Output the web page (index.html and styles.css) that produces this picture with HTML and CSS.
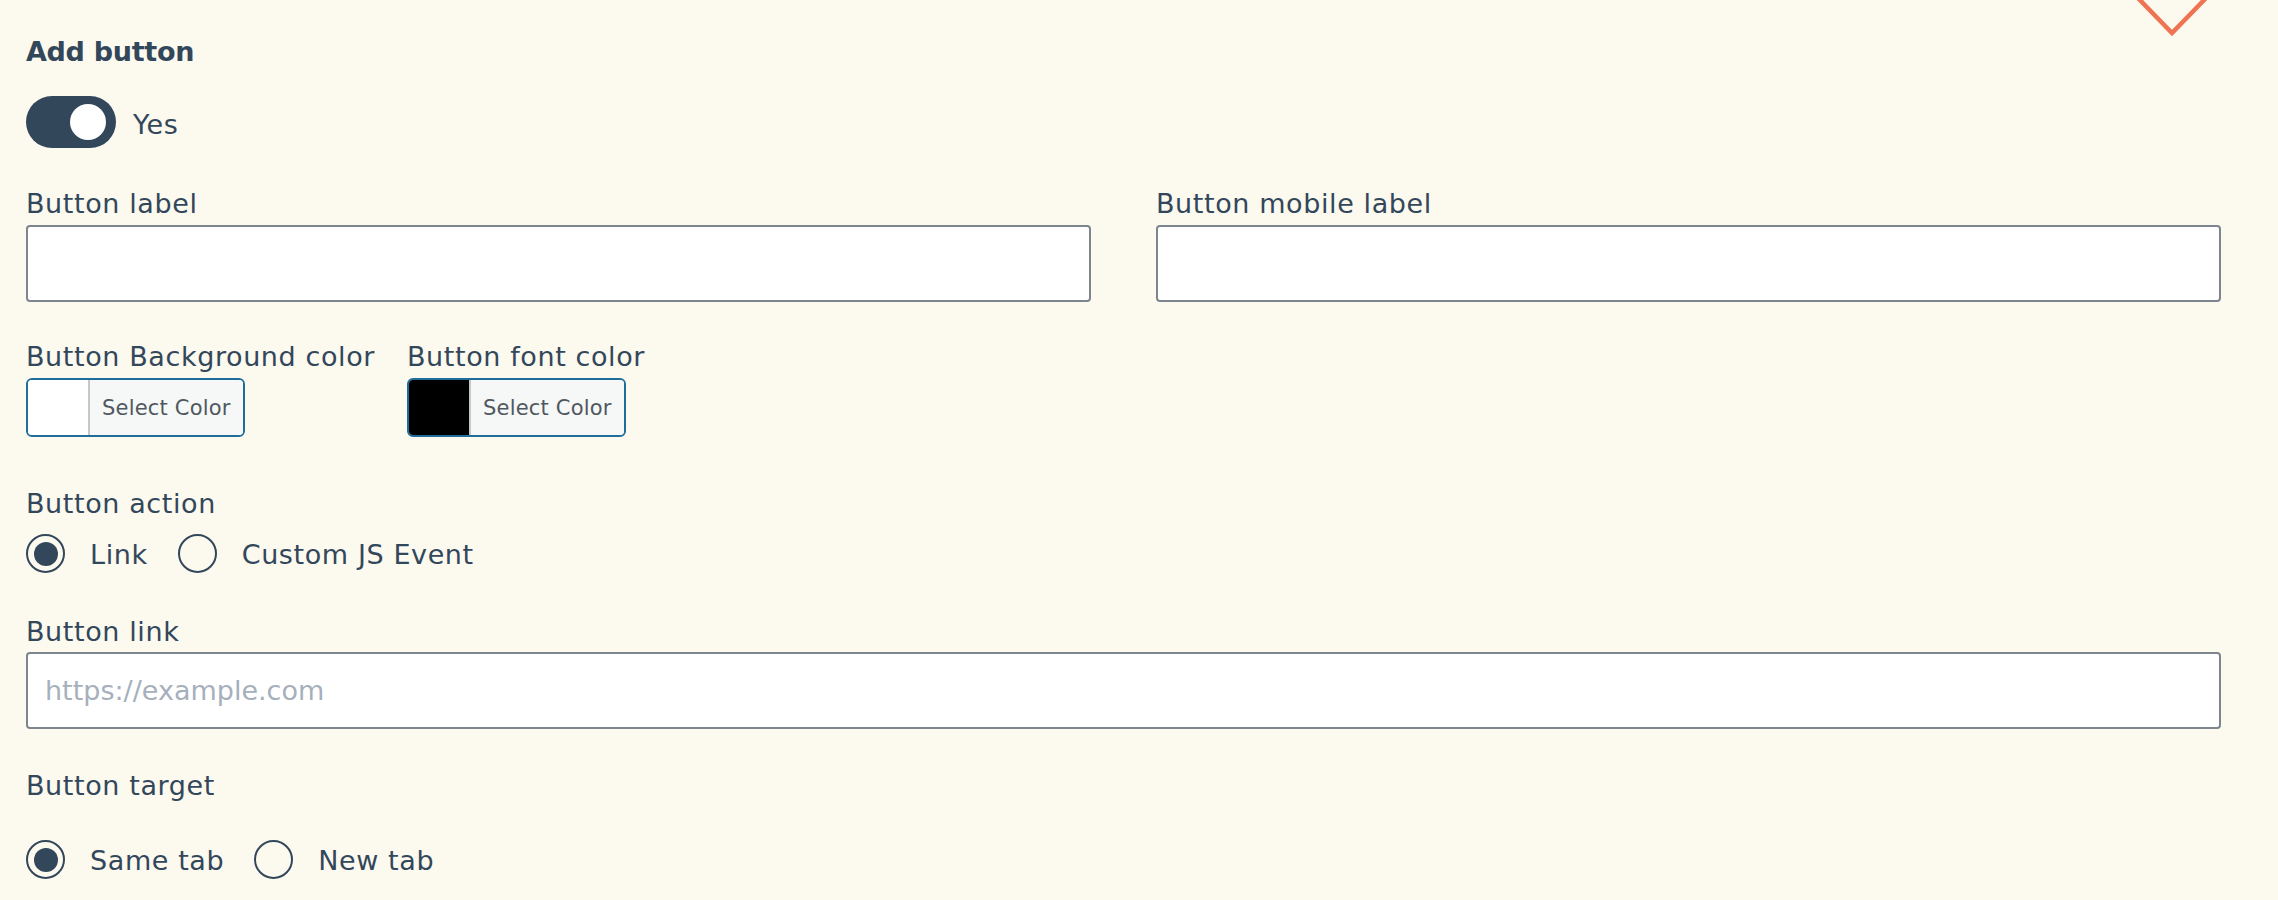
FILE: index.html
```html
<!DOCTYPE html>
<html lang="en">
<head>
<meta charset="utf-8">
<title>Add button</title>
<link rel="stylesheet" href="styles.css">
</head>
<body>
<svg class="chevron" width="80" height="40" viewBox="0 0 80 40" aria-hidden="true">
  <polyline points="5,-3 40,33 75,-3" fill="none" stroke="#ee7454" stroke-width="4.5" stroke-linejoin="miter"/>
</svg>
<main class="form">
  <h2 class="section-title">Add button</h2>
  <div class="toggle-row">
    <span class="toggle"><span class="toggle-knob"></span></span>
    <span class="toggle-text">Yes</span>
  </div>

  <div class="field-grid">
    <div class="field">
      <label class="field-label">Button label</label>
      <input class="text-input" type="text">
    </div>
    <div class="field">
      <label class="field-label">Button mobile label</label>
      <input class="text-input" type="text">
    </div>
  </div>

  <div class="color-row">
    <div class="color-field color-field-first">
      <label class="field-label">Button Background color</label>
      <button class="picker" type="button"><span class="swatch swatch-white"></span><span class="picker-text">Select Color</span></button>
    </div>
    <div class="color-field">
      <label class="field-label">Button font color</label>
      <button class="picker" type="button"><span class="swatch swatch-black"></span><span class="picker-text">Select Color</span></button>
    </div>
  </div>

  <div class="field field-action">
    <label class="field-label">Button action</label>
    <div class="radio-group radio-group-tight">
      <span class="radio-item"><span class="radio radio-checked"></span><span class="radio-text">Link</span></span>
      <span class="radio-item"><span class="radio"></span><span class="radio-text">Custom JS Event</span></span>
    </div>
  </div>

  <div class="field field-link">
    <label class="field-label">Button link</label>
    <input class="text-input text-input-link" type="text" placeholder="https://example.com">
  </div>

  <div class="field field-target">
    <label class="field-label">Button target</label>
    <div class="radio-group radio-group-loose">
      <span class="radio-item"><span class="radio radio-checked"></span><span class="radio-text">Same tab</span></span>
      <span class="radio-item"><span class="radio"></span><span class="radio-text">New tab</span></span>
    </div>
  </div>
</main>
</body>
</html>
```

FILE: styles.css
```css
* {
  box-sizing: border-box;
}

html, body {
  margin: 0;
  padding: 0;
  background: #fcf9ef;
}

body {
  position: relative;
  width: 2278px;
  min-height: 900px;
  overflow: hidden;
  font-family: "DejaVu Sans", sans-serif;
  color: #33475b;
}

.chevron {
  position: absolute;
  top: 0;
  left: 2132px;
}

.form {
  padding: 36px 57px 0 26px;
}

.section-title {
  margin: 0;
  font-size: 27px;
  line-height: 32px;
  font-weight: 700;
  letter-spacing: -0.3px;
}

.toggle-row {
  margin-top: 28px;
  display: flex;
  align-items: center;
  gap: 17px;
}

.toggle {
  width: 90px;
  height: 52px;
  border-radius: 26px;
  background: #33475b;
  display: flex;
  align-items: center;
  justify-content: flex-end;
  padding: 0 10px;
}

.toggle-knob {
  width: 36px;
  height: 36px;
  border-radius: 50%;
  background: #ffffff;
}

.toggle-text {
  font-size: 27px;
  line-height: 32px;
  padding-top: 6px;
  letter-spacing: 0.6px;
}

.field-label {
  display: block;
  font-size: 27px;
  line-height: 32px;
  margin-bottom: 5px;
  white-space: nowrap;
  letter-spacing: 0.6px;
}

.field-grid {
  margin-top: 40px;
  display: grid;
  grid-template-columns: 1fr 1fr;
  column-gap: 65px;
}

.text-input {
  display: block;
  width: 100%;
  height: 77px;
  border: 2px solid #7d858e;
  border-radius: 4px;
  background: #ffffff;
  padding: 0 17px;
  font-family: "DejaVu Sans", sans-serif;
  font-size: 27px;
  color: #33475b;
  outline: none;
}

.text-input::placeholder {
  color: #a6b0bc;
}

.color-row {
  margin-top: 39px;
  display: flex;
}

.color-field-first {
  flex: 0 0 381px;
}

.picker {
  display: flex;
  height: 59px;
  padding: 0;
  margin: 0;
  border: 2px solid #1e6d9a;
  border-radius: 6px;
  background: #f6f7f7;
  overflow: hidden;
  font-family: "DejaVu Sans", sans-serif;
  cursor: pointer;
}

.swatch {
  width: 60px;
  height: 100%;
}

.swatch-white {
  background: #ffffff;
}

.swatch-black {
  background: #000000;
}

.picker-text {
  display: flex;
  align-items: center;
  height: 100%;
  padding: 0 12px;
  border-left: 2px solid #c6c7c9;
  font-size: 21px;
  color: #50575e;
  background: #f6f7f7;
  letter-spacing: 0.2px;
}

.field-action {
  margin-top: 51px;
}

.field-link {
  margin-top: 43px;
}

.field-link .field-label {
  margin-bottom: 4px;
}

.field-target {
  margin-top: 41px;
}

.radio-group {
  display: flex;
  align-items: center;
  gap: 30px;
}

.radio-group-tight {
  margin-top: 14px;
}

.radio-group-loose {
  margin-top: 38px;
}

.radio-item {
  display: flex;
  align-items: center;
  gap: 25px;
}

.radio {
  width: 39px;
  height: 39px;
  border: 2px solid #33475b;
  border-radius: 50%;
  padding: 5.5px;
  background-clip: content-box;
}

.radio-checked {
  background-color: #33475b;
}

.radio-text {
  font-size: 27px;
  line-height: 32px;
  padding-top: 2px;
  letter-spacing: 0.6px;
}
```
